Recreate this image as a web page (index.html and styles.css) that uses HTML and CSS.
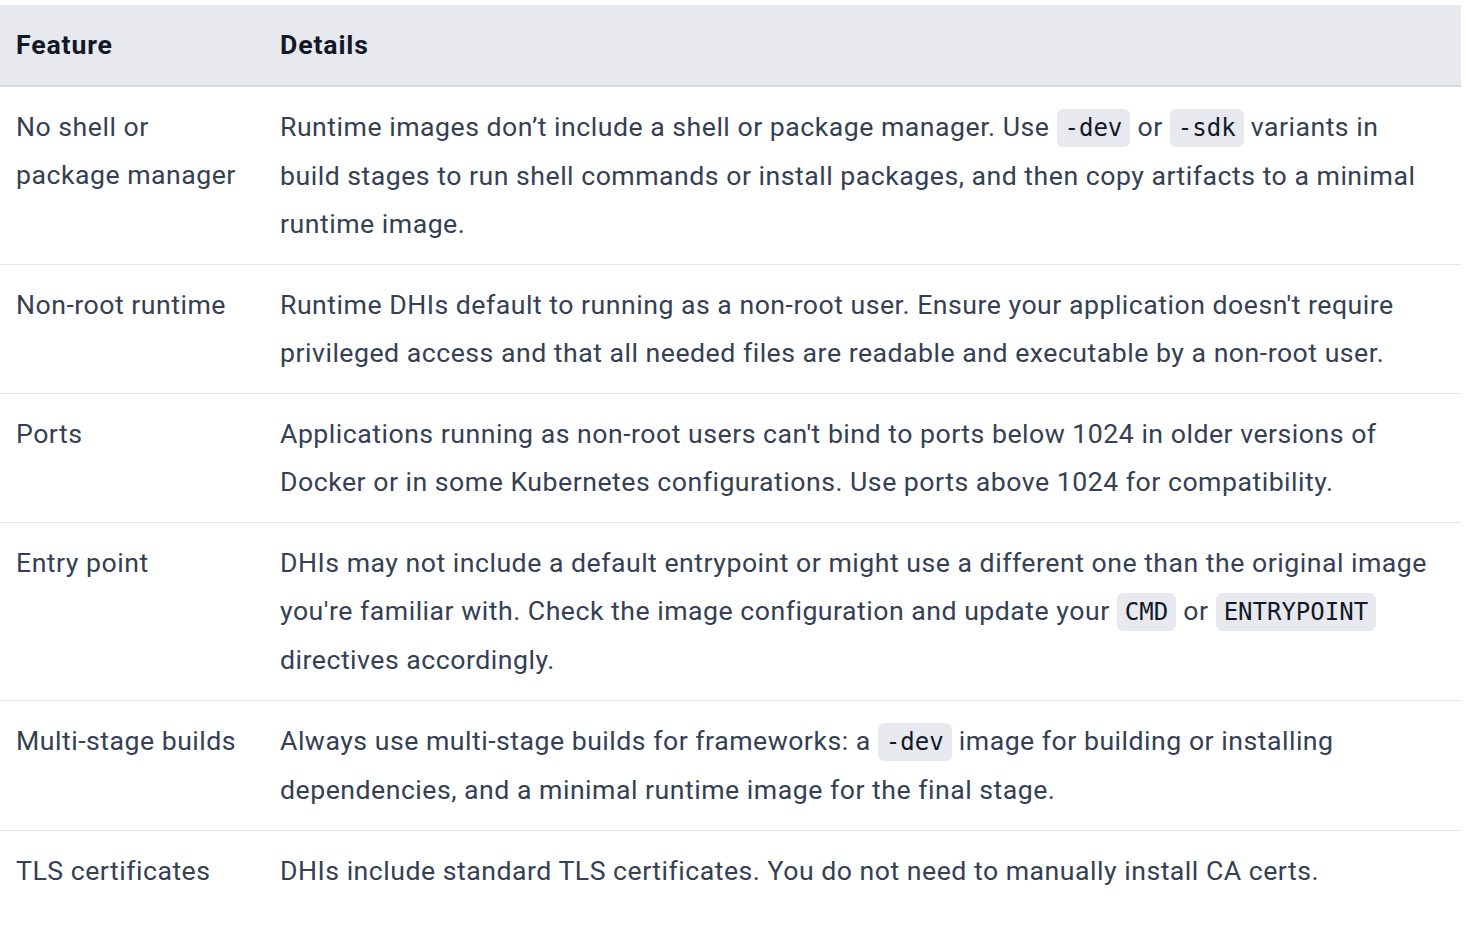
FILE: index.html
```html
<!DOCTYPE html>
<html lang="en">
<head>
<meta charset="utf-8">
<link rel="stylesheet" href="styles.css">
</head>
<body>
<table class="features">
  <thead>
    <tr><th class="col-feature">Feature</th><th>Details</th></tr>
  </thead>
  <tbody>
    <tr>
      <td>No shell or package manager</td>
      <td>Runtime images don’t include a shell or package manager. Use <code>-dev</code> or <code>-sdk</code> variants in build stages to run shell commands or install packages, and then copy artifacts to a minimal runtime image.</td>
    </tr>
    <tr>
      <td>Non-root runtime</td>
      <td>Runtime DHIs default to running as a non-root user. Ensure your application doesn't require privileged access and that all needed files are readable and executable by a non-root user.</td>
    </tr>
    <tr>
      <td>Ports</td>
      <td>Applications running as non-root users can't bind to ports below 1024 in older versions of Docker or in some Kubernetes configurations. Use ports above 1024 for compatibility.</td>
    </tr>
    <tr>
      <td>Entry point</td>
      <td>DHIs may not include a default entrypoint or might use a different one than the original image you're familiar with. Check the image configuration and update your <code>CMD</code> or <code>ENTRYPOINT</code> directives accordingly.</td>
    </tr>
    <tr>
      <td>Multi-stage builds</td>
      <td>Always use multi-stage builds for frameworks: a <code>-dev</code> image for building or installing dependencies, and a minimal runtime image for the final stage.</td>
    </tr>
    <tr>
      <td>TLS certificates</td>
      <td>DHIs include standard TLS certificates. You do not need to manually install CA certs.</td>
    </tr>
  </tbody>
</table>
</body>
</html>
```
FILE: styles.css
```css
html, body {
  margin: 0;
  padding: 0;
  background: #ffffff;
}
body {
  padding-top: 5px;
  font-family: Roboto, "Noto Sans", sans-serif;
  font-size: 26.67px;
  line-height: 48px;
  letter-spacing: 0.5px;
  color: #344054;
}
.features {
  width: 1461px;
  border-collapse: collapse;
  border-spacing: 0;
}
.features th {
  background: #e8e9ee;
  color: #111827;
  font-weight: 700;
  letter-spacing: 0.85px;
  text-align: left;
  padding: 16px;
  border-bottom: 2px solid #d5d8de;
}
.features .col-feature {
  width: 232px;
}
.features td {
  padding: 16px;
  vertical-align: top;
  border-bottom: 1px solid #e3e5e9;
}
.features tbody tr:last-child td {
  border-bottom: none;
}
.features code {
  font-family: "DejaVu Sans Mono", "Liberation Mono", monospace;
  font-size: 24px;
  letter-spacing: 0;
  color: #111827;
  background: #e8e9ee;
  border-radius: 6px;
  padding: 5px 8px;
}
```
